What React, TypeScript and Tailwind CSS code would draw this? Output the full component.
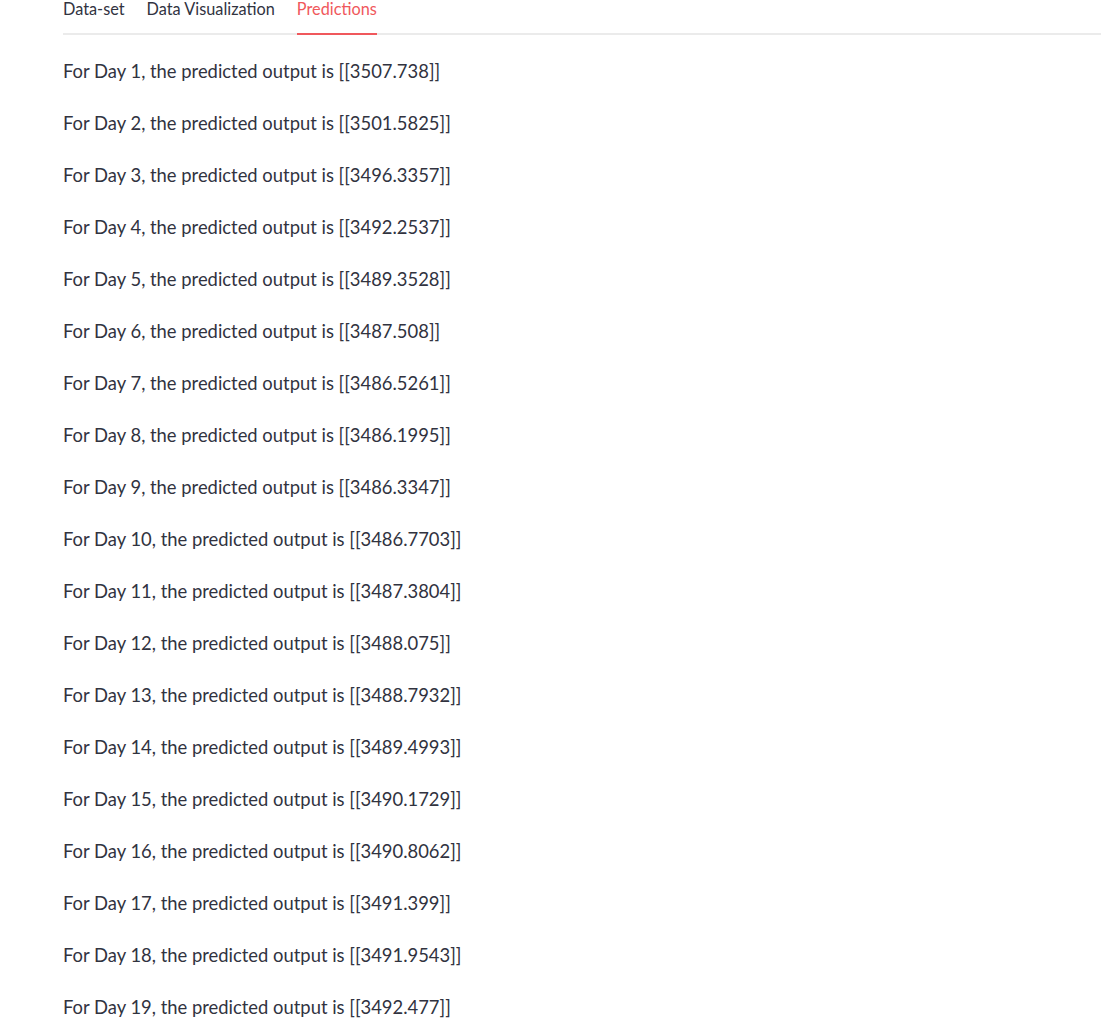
const predictions = [
  "3507.738",
  "3501.5825",
  "3496.3357",
  "3492.2537",
  "3489.3528",
  "3487.508",
  "3486.5261",
  "3486.1995",
  "3486.3347",
  "3486.7703",
  "3487.3804",
  "3488.075",
  "3488.7932",
  "3489.4993",
  "3490.1729",
  "3490.8062",
  "3491.399",
  "3491.9543",
  "3492.477",
];

const tabs = ["Data-set", "Data Visualization", "Predictions"];

export default function App() {
  return (
    <div
      className="min-h-screen bg-white pl-[63px] text-[#31333f] overflow-hidden"
      style={{ fontFamily: '"Source Sans Pro", Lato, "Noto Sans", sans-serif' }}
    >
      <div className="flex gap-[22px] border-b-2 border-[#ebebeb] h-[35px]">
        {tabs.map((t) => {
          const active = t === "Predictions";
          return (
            <div
              key={t}
              className={`-mt-[3px] h-[38px] pb-[8px] text-[16.3px] leading-[24px] -mb-[2px] border-b-2 ${
                active ? "border-[#f0585c] text-[#f0585c]" : "border-transparent"
              }`}
            >
              {t}
            </div>
          );
        })}
      </div>
      <div className="mt-[11px] flex flex-col">
        {predictions.map((p, i) => (
          <div key={i} className="h-[52px] flex items-center text-[18.4px]">
            For Day {i + 1}, the predicted output is [[{p}]]
          </div>
        ))}
      </div>
    </div>
  );
}
